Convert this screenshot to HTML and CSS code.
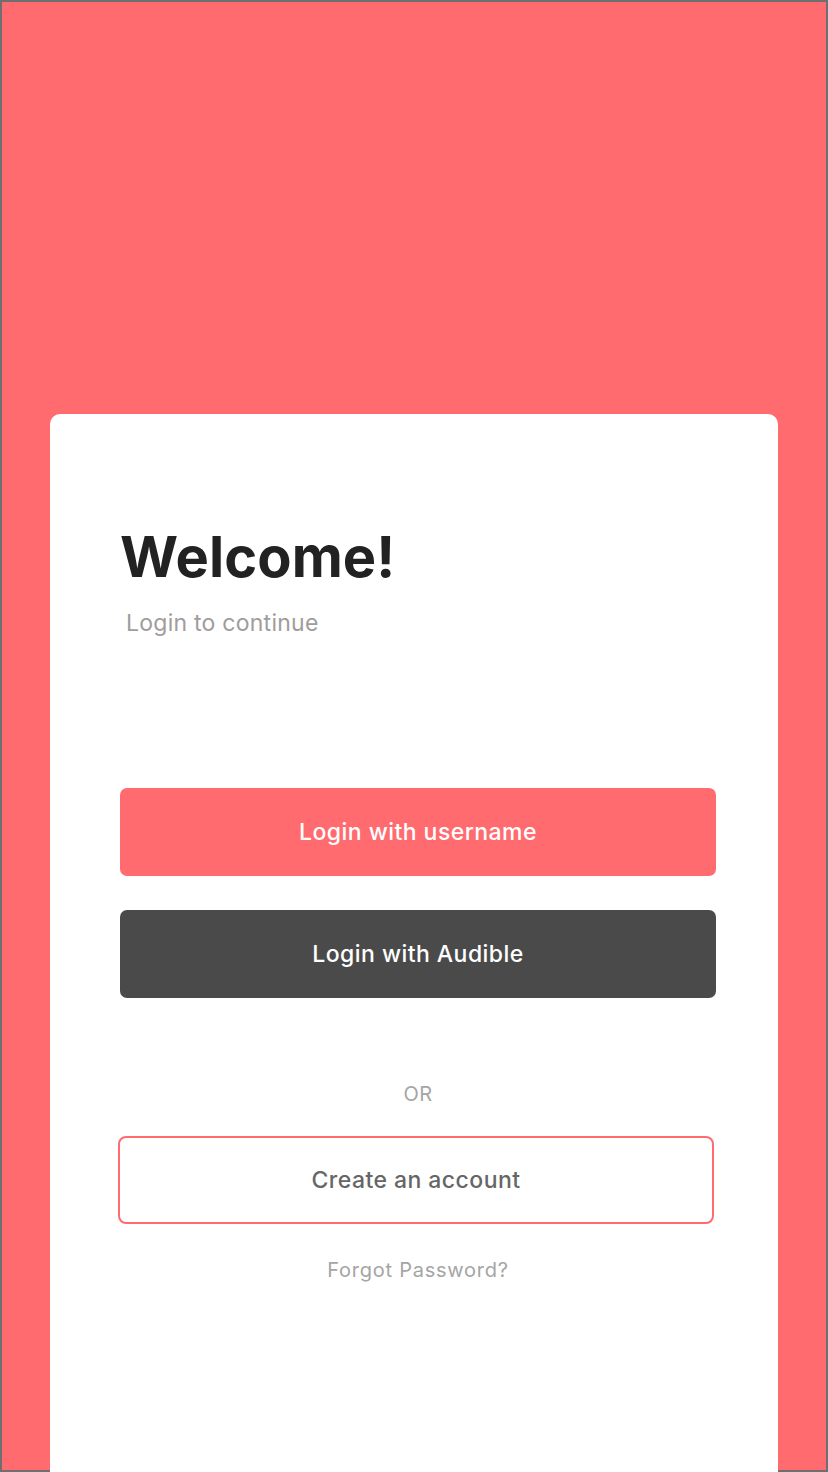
FILE: index.html
```html
<!DOCTYPE html>
<html>
<head>
<meta charset="utf-8">
<link rel="stylesheet" href="styles.css">
</head>
<body>
<div class="frame">
  <main class="card">
    <h1 class="title">Welcome!</h1>
    <p class="subtitle">Login to continue</p>
    <div class="actions">
      <button class="btn btn-primary">Login with username</button>
      <button class="btn btn-dark">Login with Audible</button>
      <div class="or">OR</div>
      <button class="btn btn-outline">Create an account</button>
      <a class="forgot" href="#">Forgot Password?</a>
    </div>
  </main>
</div>
</body>
</html>
```

FILE: styles.css
```css
html, body {
  margin: 0;
  padding: 0;
  overflow: hidden;
}
body {
  font-family: Inter, "Noto Sans", sans-serif;
  background: #ffffff;
}
.frame {
  box-sizing: border-box;
  width: 828px;
  height: 1472px;
  border: 2px solid #6f6f6f;
  background: #ff6b6f;
  padding: 412px 48px 0 48px;
}
.card {
  box-sizing: border-box;
  height: 1058px;
  background: #ffffff;
  border-radius: 10px 10px 0 0;
  padding: 109px 62px 0 70px;
}
.title {
  margin: 0;
  font-size: 56px;
  font-weight: 700;
  color: #222222;
  line-height: 68px;
  letter-spacing: 0.1px;
}
.subtitle {
  margin: 17px 0 0 6px;
  font-size: 23px;
  color: #a09c9c;
  line-height: 30px;
  letter-spacing: 0.25px;
}
.actions {
  margin-top: 150px;
  display: flex;
  flex-direction: column;
  align-items: stretch;
}
.btn {
  box-sizing: border-box;
  height: 88px;
  border: none;
  border-radius: 7px;
  font-family: inherit;
  font-size: 23px;
  font-weight: 500;
  color: #ffffff;
  width: 596px;
  letter-spacing: 0.45px;
}
.btn-primary {
  background: #ff6b6f;
}
.btn-dark {
  background: #4a4a4a;
  margin-top: 34px;
}
.or {
  margin-top: 84px;
  text-align: center;
  font-size: 20px;
  color: #a5a5a5;
  line-height: 24px;
  width: 596px;
  letter-spacing: 0.3px;
}
.btn-outline {
  margin-top: 30px;
  margin-left: -2px;
  background: #ffffff;
  border: 2px solid #ff6b6f;
  border-radius: 8px;
  color: #666666;
}
.forgot {
  margin-top: 34px;
  text-align: center;
  font-size: 20px;
  color: #a5a5a5;
  text-decoration: none;
  line-height: 24px;
  width: 596px;
  letter-spacing: 0.75px;
}
```
